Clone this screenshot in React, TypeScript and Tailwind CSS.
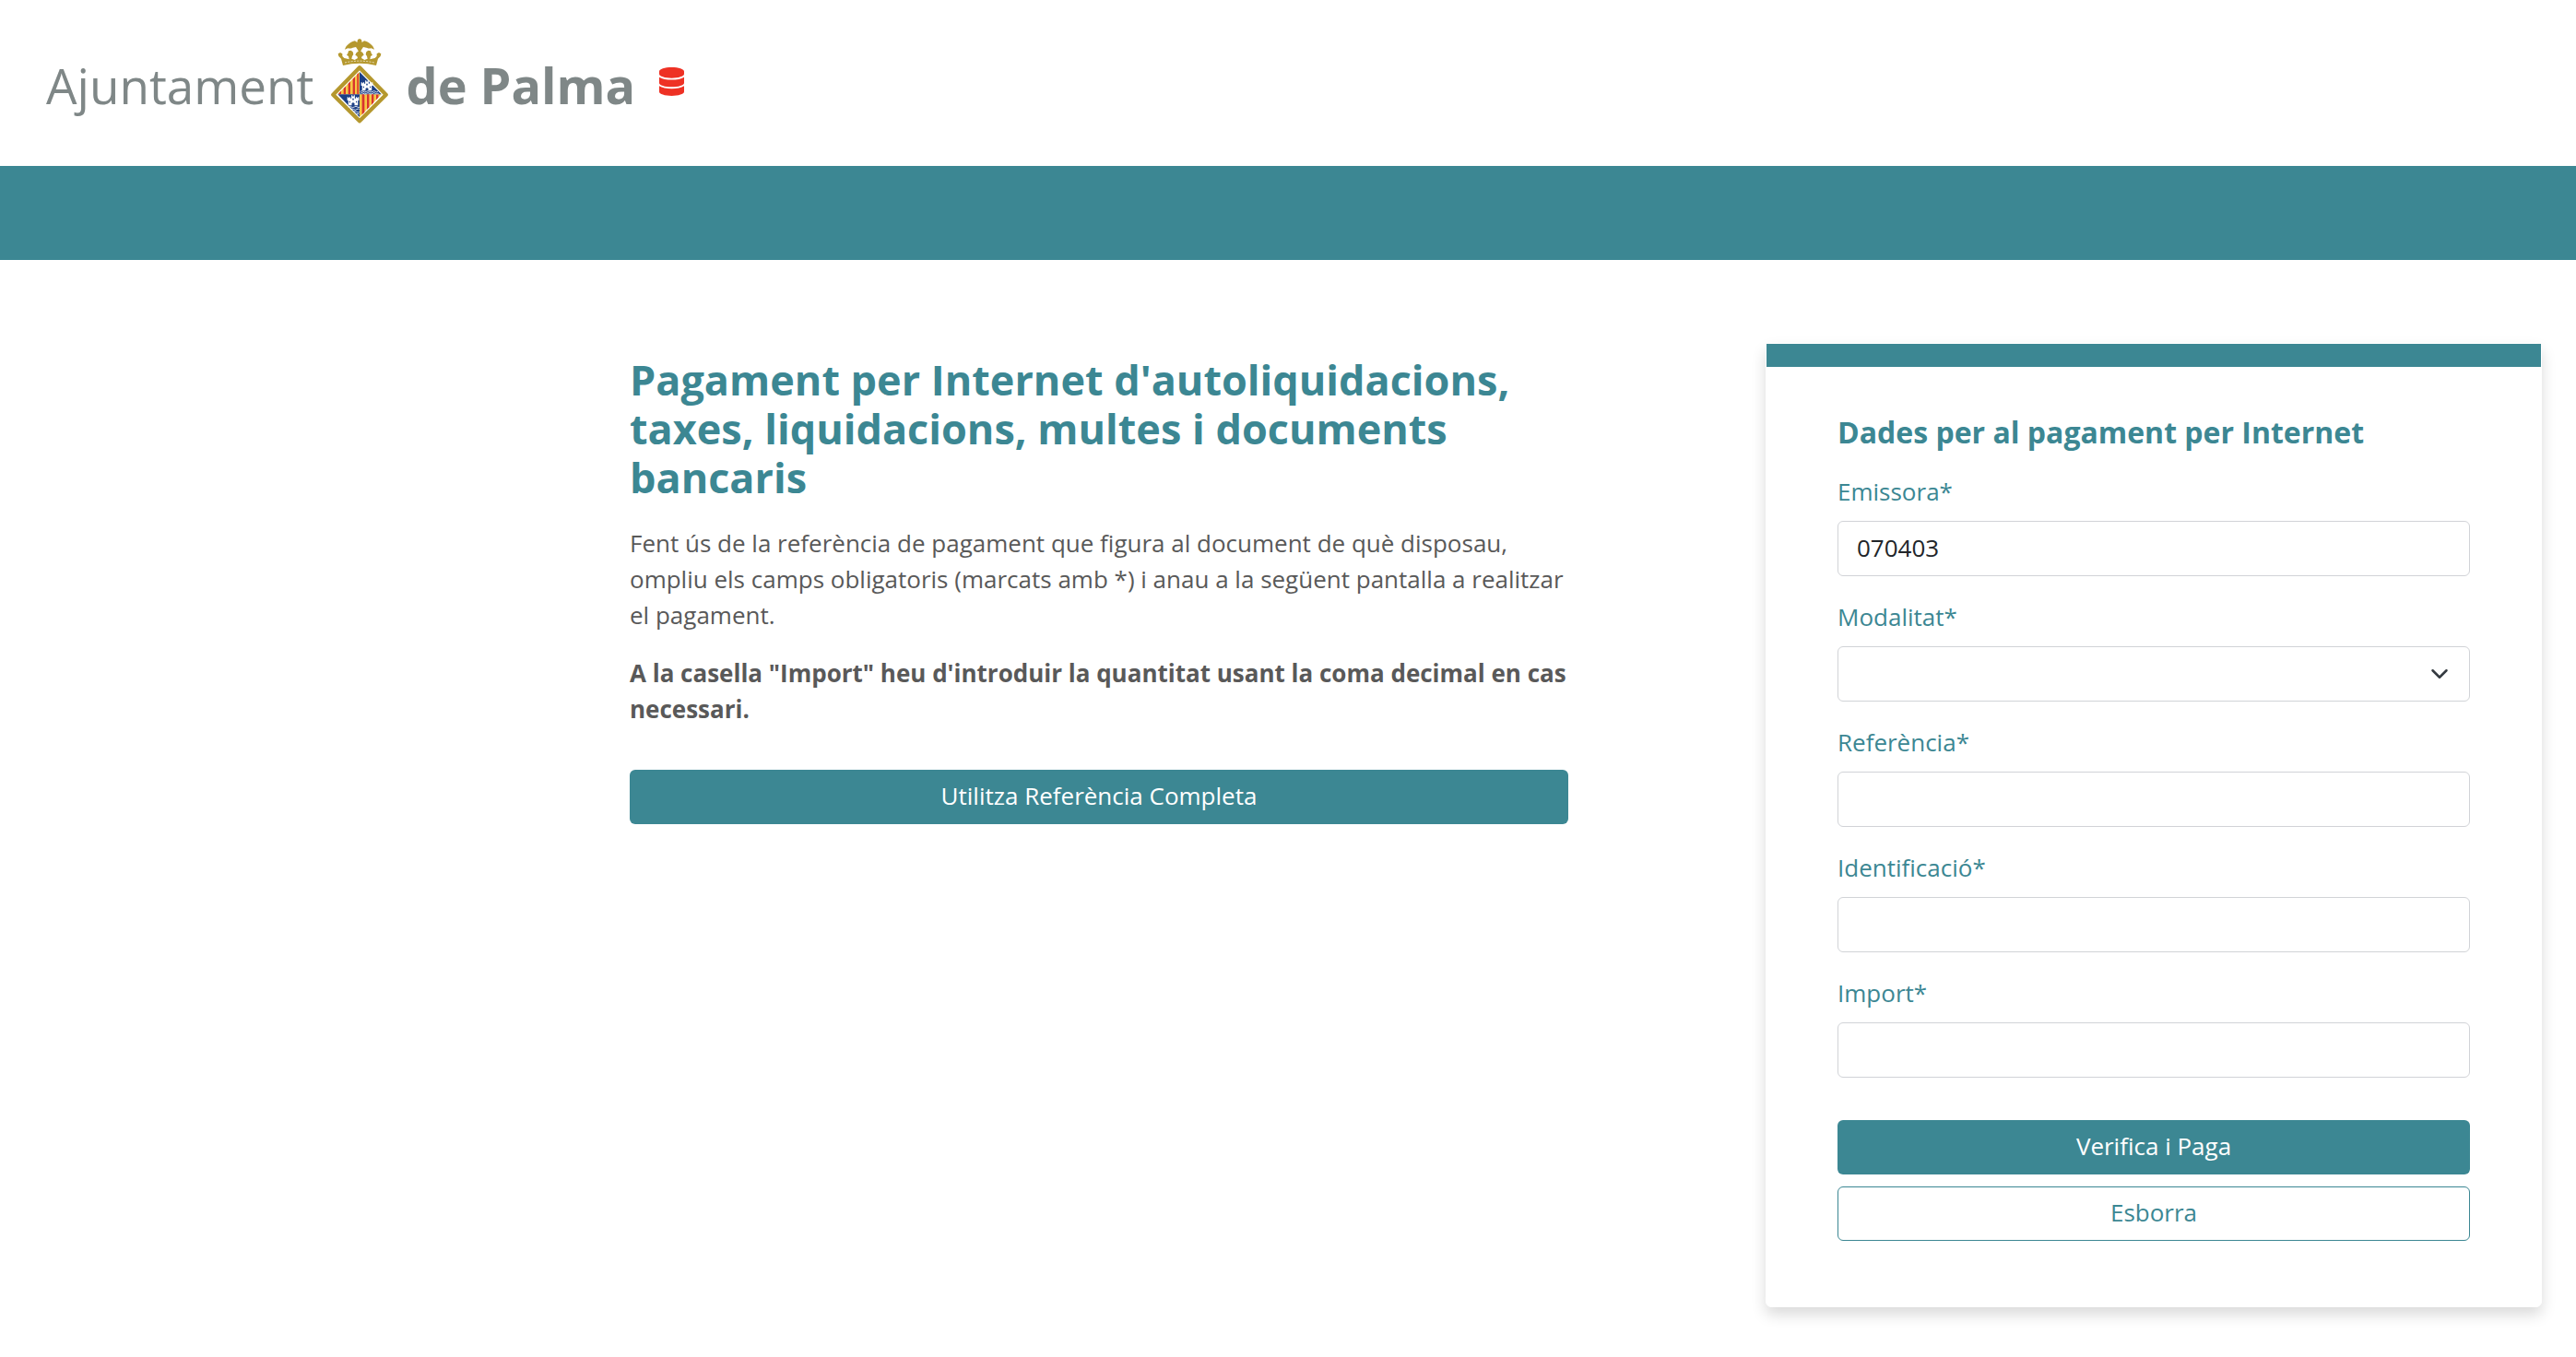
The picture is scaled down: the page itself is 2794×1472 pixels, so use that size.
import React from 'react';
import { FaDatabase } from "react-icons/fa";

export default function App() {
    return (
        <div className="min-h-screen w-full bg-white font-['Open_Sans',sans-serif] text-[26px] leading-[39px] text-[#595959]">

            {/* Header */}
            <header className="flex h-[180px] items-center pl-[50px] pb-1">
                <a href="#" className="flex items-center gap-[18px] text-[53px] text-[#7f8787]">
                    <span className="pt-2">Ajuntament</span>
                    <Crest />
                    <span className="pt-2 text-[54px] font-bold">de Palma</span>
                </a>
                <FaDatabase className="ml-[26px] h-[31px] w-[27px] text-[#ee3124]" />
            </header>
            <div className="h-[102px] bg-[#3c8793]" />

            {/* Content */}
            <main className="grid grid-cols-[683fr_1018fr_214fr_842fr_37fr] items-start pt-[90px] pb-[54px]">
                <section className="col-start-2 pt-[13px]">
                    <h1 className="text-[45px] leading-[53px] font-bold text-[#3c8793]">
                        Pagament per Internet d'autoliquidacions, taxes, liquidacions, multes i documents bancaris
                    </h1>
                    <p className="mt-[26px]">
                        Fent ús de la referència de pagament que figura al document de què disposau, ompliu els camps obligatoris (marcats amb *) i anau a la següent pantalla a realitzar el pagament.
                    </p>
                    <p className="mt-6 font-bold">
                        A la casella "Import" heu d'introduir la quantitat usant la coma decimal en cas necessari.
                    </p>
                    <button type="button" className="mt-[46px] h-[59px] w-full rounded-md bg-[#3c8793] pb-0.5 text-white">
                        Utilitza Referència Completa
                    </button>
                </section>

                <form className="col-start-4 rounded-md border border-white bg-white shadow-[0_8px_16px_rgba(0,0,0,0.15)]">
                    <div className="h-[25px] bg-[#3c8793]" />
                    <div className="px-[77px] pt-[52px] pb-[71px]">
                        <h2 className="mb-[26px] text-[32px] leading-[38px] font-bold text-[#3c8793]">Dades per al pagament per Internet</h2>
                        <div className="flex flex-col gap-[25px]">
                            <Field id="emissora" label="Emissora*" value="070403" />
                            <div>
                                <label htmlFor="modalitat" className="mb-3 block text-[#3c8793]">Modalitat*</label>
                                <div className="relative">
                                    <select id="modalitat" className="block h-[60px] w-full appearance-none rounded-md border border-[#d1d3d7] bg-white px-5 text-[#212529]">
                                        <option value=""></option>
                                    </select>
                                    <svg viewBox="0 0 16 16" className="pointer-events-none absolute top-[20px] right-[23px] h-5 w-5" fill="none" stroke="#343a40" strokeWidth="2" strokeLinecap="round" strokeLinejoin="round">
                                        <path d="m2 5 6 6 6-6" />
                                    </svg>
                                </div>
                            </div>
                            <Field id="referencia" label="Referència*" />
                            <Field id="identificacio" label="Identificació*" />
                            <Field id="import" label="Import*" />
                        </div>
                        <button type="button" className="mt-[46px] block h-[59px] w-full rounded-md bg-[#3c8793] pb-0.5 text-white">Verifica i Paga</button>
                        <button type="reset" className="mt-[13px] block h-[59px] w-full rounded-md border border-[#3c8793] pb-0.5 text-[#3c8793]">Esborra</button>
                    </div>
                </form>
            </main>
        </div>
    );
}

function Field({ id, label, value = "" }: { id: string, label: string, value?: string }) {
    return (
        <div>
            <label htmlFor={id} className="mb-3 block text-[#3c8793]">{label}</label>
            <input id={id} type="text" defaultValue={value} className="block h-[60px] w-full rounded-md border border-[#d1d3d7] bg-white px-5 pb-0.5 text-[#212529]" />
        </div>
    )
}

function Crest() {
    return (
        <svg viewBox="54 35 192 276" className="h-[92px] w-16 shrink-0" role="img" aria-label="Escut de Palma">
            {/* Crown */}
            <g fill="#b5982e">
                <path d="M102 70C106 56 120 46 135 42L142 47L144 38L150 35L156 38L158 47L165 42C180 46 194 56 198 70L188 66C182 68 178 66 172 64L162 62L154 74L150 82L146 74L138 62L128 64C122 66 118 68 112 66Z" />
                <path d="M96 122L90 100L82 92L80 84L87 80L94 84L94 92L100 98L110 100L116 102L114 92L108 88L112 82L114 75L122 73L128 78L130 86L126 92L124 100L134 104L144 98L142 92L136 88L140 80L146 76V70H154V76L160 80L164 88L158 92L156 98L166 104L176 100L174 92L170 86L172 78L178 73L186 75L188 82L192 88L186 92L184 102L190 100L200 98L206 92L206 84L213 80L220 84L218 92L210 100L204 122Q150 108 96 122Z" />
            </g>
            <path d="M102 113Q150 102 198 113" fill="none" stroke="#fff" strokeWidth="2" strokeDasharray="6 4" />

            {/* Shield */}
            <path d="M150 129L236 217L150 303L64 217Z" fill="#fff" stroke="#b5982e" strokeWidth="13" strokeLinejoin="round" />
            <path d="M150 143V216H79Z" fill="#f6c744" />
            <path d="M150 216H221L150 290Z" fill="#f6c744" />
            <path d="M150 143V216H221Z" fill="#1c3f85" />
            <path d="M150 216H79L150 290Z" fill="#1c3f85" />
            <g fill="#d9322e">
                <path d="M82 216V213L90 205V216Z" />
                <path d="M98 216V197L105 190V216Z" />
                <path d="M113 216V181L120 174V216Z" />
                <path d="M128 216V166L135 159V216Z" />
                <path d="M142 216V151L147 146V216Z" />
                <path d="M158 216H166V274L158 282Z" />
                <path d="M174 216H181V258L174 265Z" />
                <path d="M189 216H196V242L189 250Z" />
                <path d="M204 216H211V226L204 234Z" />
            </g>
            <Castle x={174} y={190} />
            <Castle x={129} y={238} />
            <g fill="none" stroke="#fff" strokeWidth="2.4">
                <path d="M152 207q5-4 10 0t10 0 10 0 10 0 10 0 8 0" />
                <path d="M152 213q5-4 10 0t10 0 10 0 10 0 10 0 10 0" />
                <path d="M113 257q5-4 10 0t10 0 10 0 7 0" />
                <path d="M121 265q5-4 10 0t10 0 8 0" />
                <path d="M130 273q5-4 10 0t10 0" />
                <path d="M139 281q5-4 10 0" />
            </g>
        </svg>
    )
}

function Castle({ x, y }: { x: number, y: number }) {
    return (
        <g transform={`translate(${x} ${y}) scale(1.12)`}>
            <path d="M-5 -17H-2V-14H2V-17H5V-8H8V-12H11V-9H14V-12H17V-2H14V12H4V6Q0 2-4 6V12H-14V-2H-17V-12H-14V-9H-11V-12H-8V-8H-5Z" fill="#fff" />
            <path d="M-2 -8H2V-3H-2ZM-11 0H-8V4H-11ZM8 0H11V4H8Z" fill="#1c3f85" />
        </g>
    )
}
